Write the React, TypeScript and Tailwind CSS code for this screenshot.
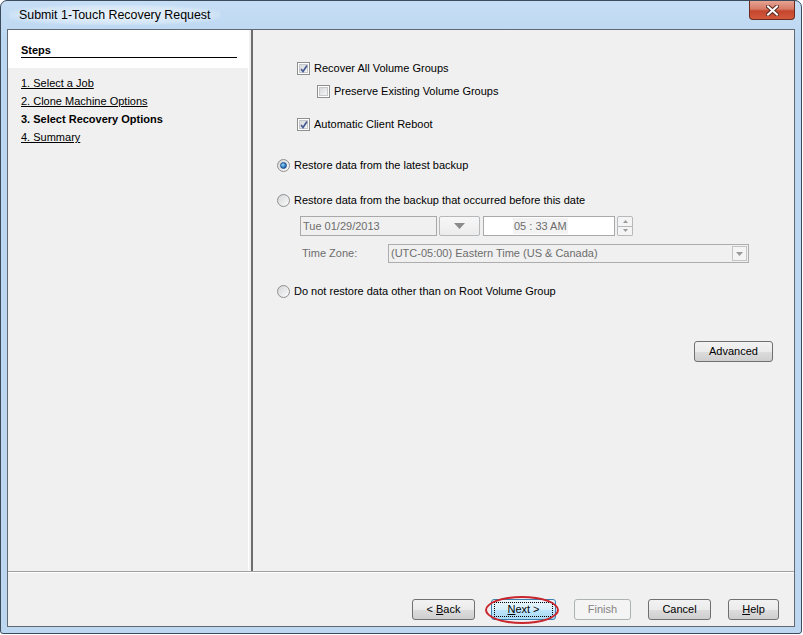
import type { ReactNode } from 'react'

const font = { fontFamily: '"Liberation Sans", Arial, sans-serif' }

function CheckBox({ checked }: { checked?: boolean }) {
    return (
        <span className="relative w-[13px] h-[13px] shrink-0 border border-[#8e8f8f] bg-white p-[1px]">
            <span className="block w-full h-full border border-[#c6c8cb] bg-[linear-gradient(135deg,#d8d9db,#f6f6f6)]" />
            {checked && (
                <svg className="absolute left-[1px] top-[1px]" width="10" height="10" viewBox="0 0 10 10">
                    <path d="M2 5 L4 7.5 L8 1.5" fill="none" stroke="#4a5f97" strokeWidth="1.8" />
                </svg>
            )}
        </span>
    )
}

function Radio({ checked }: { checked?: boolean }) {
    return (
        <span className="relative w-[13px] h-[13px] shrink-0 rounded-full border border-[#8e8f8f] bg-[linear-gradient(135deg,#d5d6d8,#fbfbfb)] flex items-center justify-center">
            {checked && (
                <span className="w-[7px] h-[7px] rounded-full border border-[#1c4f86] bg-[radial-gradient(circle_at_35%_35%,#9ad4fb,#2b77c3_60%,#174f8d)]" />
            )}
        </span>
    )
}

function Row({ children, className = '' }: { children: ReactNode; className?: string }) {
    return <div className={`flex items-center h-[16px] gap-[4px] text-[11px] text-black ${className}`}>{children}</div>
}

function WinButton({ label, width, kind = 'normal' }: { label: ReactNode; width: string; kind?: 'normal' | 'default' | 'disabled' }) {
    if (kind === 'disabled') {
        return (
            <div className={`${width} h-[21px] rounded-[3px] border border-[#adb2b5] bg-[#f4f4f4] flex items-center justify-center text-[11px] text-[#838383]`}>
                {label}
            </div>
        )
    }
    if (kind === 'default') {
        return (
            <div className={`${width} h-[21px] rounded-[3px] border border-[#3c7fb1] bg-[linear-gradient(#eaf6fd_0%,#d9f0fc_50%,#bee6fd_51%,#a7d9f5_100%)] p-[2px]`}>
                <div className="w-full h-full border border-dotted border-black flex items-center justify-center text-[11px] text-black">
                    {label}
                </div>
            </div>
        )
    }
    return (
        <div className={`${width} h-[21px] rounded-[3px] border border-[#707070] bg-[linear-gradient(#f2f2f2_0%,#ebebeb_50%,#dddddd_51%,#cfcfcf_100%)] flex items-center justify-center text-[11px] text-black`}>
            {label}
        </div>
    )
}

export default function App() {
    return (
        <div className="w-[803px] h-[635px] bg-white" style={font}>
            <div className="w-[802px] h-[634px] rounded-t-[7px] rounded-b-[3px] border border-[#3b4b5c] bg-[linear-gradient(#c6def5,#bcd7f1_40px,#bdd7f1)] flex flex-col px-[6px] pb-[6px]">
                {/* title bar */}
                <div className="h-[28px] flex justify-between items-start shrink-0">
                    <div className="pl-[2px] pt-[4px]">
                        <span className="block px-[10px] py-[2px] leading-[16px] text-[12.4px] text-black bg-[radial-gradient(ellipse_at_center,rgba(255,255,255,0.7),rgba(255,255,255,0.25)_65%,rgba(255,255,255,0)_80%)]">
                            Submit 1-Touch Recovery Request
                        </span>
                    </div>
                    <div className="w-[46px] h-[19px] rounded-b-[4px] border border-t-0 border-[#6e2a1f] bg-[linear-gradient(#e6a393_0%,#d77a65_45%,#c4462e_55%,#d3593c_100%)] flex items-center justify-center">
                        <svg width="13" height="11" viewBox="0 0 13 11">
                            <path d="M2 1.5 L11 9.5 M11 1.5 L2 9.5" stroke="#5a2a22" strokeWidth="4" strokeLinecap="square" />
                            <path d="M2 1.5 L11 9.5 M11 1.5 L2 9.5" stroke="#ffffff" strokeWidth="2" strokeLinecap="square" />
                        </svg>
                    </div>
                </div>

                {/* client area */}
                <div className="flex-1 border border-[#5f6a75] bg-[#f0f0f0] flex flex-col">
                    <div className="flex-1 flex border-b border-[#a0a0a0]">
                        {/* steps panel */}
                        <div className="w-[241px] border-r border-white flex flex-col">
                            <div className="bg-white pl-[13px] pr-[11px] pt-[14px] pb-[10px]">
                                <div className="leading-[13px] text-[11px] font-bold text-black border-b border-black">Steps</div>
                            </div>
                            <div className="pl-[13px] pt-[6px] text-[11px] text-black">
                                <div className="h-[18px] leading-[18px] underline">1. Select a Job</div>
                                <div className="h-[18px] leading-[18px] underline">2. Clone Machine Options</div>
                                <div className="h-[18px] leading-[18px] font-bold">3. Select Recovery Options</div>
                                <div className="h-[18px] leading-[18px] underline">4. Summary</div>
                            </div>
                        </div>
                        <div className="w-[2px]" />
                        <div className="w-[2px] bg-[#6d6d6d]" />

                        {/* options */}
                        <div className="flex-1 flex flex-col pl-[24px] pr-[21px] pt-[30px]">
                            <Row className="pl-[20px]">
                                <CheckBox checked />
                                <span>Recover All Volume Groups</span>
                            </Row>
                            <Row className="pl-[40px] mt-[7px]">
                                <CheckBox />
                                <span>Preserve Existing Volume Groups</span>
                            </Row>
                            <Row className="pl-[20px] mt-[17px]">
                                <CheckBox checked />
                                <span>Automatic Client Reboot</span>
                            </Row>
                            <Row className="mt-[25px]">
                                <Radio checked />
                                <span>Restore data from the latest backup</span>
                            </Row>
                            <Row className="mt-[19px]">
                                <Radio />
                                <span>Restore data from the backup that occurred before this date</span>
                            </Row>

                            <div className="flex items-center h-[20px] mt-[8px] pl-[23px] text-[11px] text-[#6d6d6d]">
                                <div className="w-[137px] h-full border border-[#a9a9a9] bg-[#f0f0f0] flex items-center pl-[2px]">Tue 01/29/2013</div>
                                <div className="w-[41px] h-full ml-[2px] rounded-[2px] border border-[#b5b9bc] bg-[linear-gradient(#f7f7f7,#ececec)] flex items-center justify-center">
                                    <svg width="11" height="6" viewBox="0 0 11 6">
                                        <path d="M0 0 H11 L5.5 6 Z" fill="#8a8a8a" />
                                    </svg>
                                </div>
                                <div className="w-[132px] h-full ml-[3px] border border-[#a9a9a9] bg-white flex items-center">
                                    <span className="ml-[29px] px-[1px] h-[16px] flex items-center bg-[#f3f3f3] text-[#6d6d6d]">05 : 33 AM</span>
                                </div>
                                <div className="w-[16px] h-full ml-[2px] flex flex-col">
                                    <div className="flex-1 border border-[#b5b9bc] rounded-t-[2px] bg-[#f4f4f4] flex items-center justify-center">
                                        <svg width="5" height="3" viewBox="0 0 5 3"><path d="M0 3 H5 L2.5 0 Z" fill="#9a9a9a" /></svg>
                                    </div>
                                    <div className="flex-1 border border-t-0 border-[#b5b9bc] rounded-b-[2px] bg-[#f4f4f4] flex items-center justify-center">
                                        <svg width="5" height="3" viewBox="0 0 5 3"><path d="M0 0 H5 L2.5 3 Z" fill="#9a9a9a" /></svg>
                                    </div>
                                </div>
                            </div>

                            <div className="flex items-center h-[19px] mt-[8px] pl-[25px] text-[11px] text-[#6d6d6d]">
                                <span className="w-[86px]">Time Zone:</span>
                                <div className="w-[361px] h-full border border-[#adadad] bg-[#f0f0f0] flex items-center justify-between pl-[2px] pr-[1px]">
                                    <span>(UTC-05:00) Eastern Time (US &amp; Canada)</span>
                                    <div className="w-[15px] h-[15px] border border-[#c4c4c4] bg-[#f4f4f4] flex items-center justify-center">
                                        <svg width="7" height="4" viewBox="0 0 7 4"><path d="M0 0 H7 L3.5 4 Z" fill="#9a9a9a" /></svg>
                                    </div>
                                </div>
                            </div>

                            <Row className="mt-[20px]">
                                <Radio />
                                <span>Do not restore data other than on Root Volume Group</span>
                            </Row>

                            <div className="flex justify-end mt-[42px]">
                                <WinButton label="Advanced" width="w-[79px]" />
                            </div>
                        </div>
                    </div>

                    {/* bottom buttons */}
                    <div className="h-[54px] border-t border-white flex items-start justify-end pt-[26px] pr-[15px]">
                        <WinButton label={<span>&lt; <u>B</u>ack</span>} width="w-[63px]" />
                        <div className="relative ml-[16px]">
                            <WinButton label={<span><u>N</u>ext &gt;</span>} width="w-[65px]" kind="default" />
                            <div className="absolute -left-[6px] -right-[3px] -top-[3px] -bottom-[4px] rounded-[50%] border-2 border-[#c8262c]" />
                        </div>
                        <div className="ml-[18px]">
                            <WinButton label="Finish" width="w-[57px]" kind="disabled" />
                        </div>
                        <div className="ml-[17px]">
                            <WinButton label="Cancel" width="w-[63px]" />
                        </div>
                        <div className="ml-[17px]">
                            <WinButton label={<span><u>H</u>elp</span>} width="w-[51px]" />
                        </div>
                    </div>
                </div>
            </div>
        </div>
    )
}
